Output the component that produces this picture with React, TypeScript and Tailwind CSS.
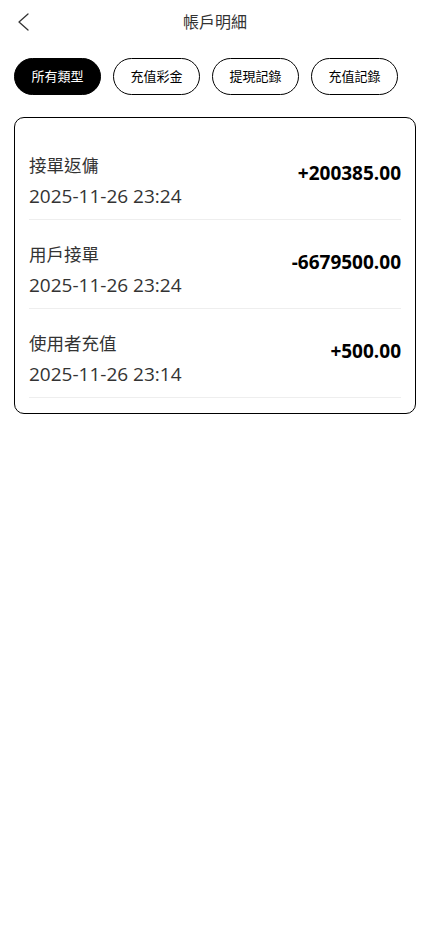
import React from "react";

const tabs = ["所有類型", "充值彩金", "提現記錄", "充值記錄"];
const rows = [
  { label: "接單返傭", date: "2025-11-26 23:24", amount: "+200385.00" },
  { label: "用戶接單", date: "2025-11-26 23:24", amount: "-6679500.00" },
  { label: "使用者充值", date: "2025-11-26 23:14", amount: "+500.00" },
];

export default function App() {
  return (
    <div
      className="w-[430px] min-h-[932px] bg-white"
      style={{ fontFamily: '"Open Sans", "Noto Sans CJK TC", sans-serif' }}
    >
      <div className="relative h-[44px] flex items-center justify-center">
        <svg
          className="absolute left-[14px] top-[10px]"
          width="20"
          height="24"
          viewBox="0 0 20 24"
          fill="none"
        >
          <path d="M14 4 L5 12 L14 20" stroke="#333" strokeWidth="1.3" strokeLinecap="round" strokeLinejoin="round" />
        </svg>
        <span className="text-[16px] text-[#333]">帳戶明細</span>
      </div>
      <div className="flex gap-[12px] px-[14px] mt-[14px]">
        {tabs.map((t, i) => (
          <div
            key={t}
            className={
              i === 0
                ? "w-[87px] h-[37px] rounded-full border border-black bg-black text-white text-[13px] flex items-center justify-center"
                : "w-[87px] h-[37px] rounded-full border border-black bg-white text-black text-[13px] flex items-center justify-center"
            }
          >
            {t}
          </div>
        ))}
      </div>
      <div className="mx-[14px] mt-[22px] border border-black rounded-[10px] px-[14px] pt-[13px] pb-[15px]">
        {rows.map((r) => (
          <div key={r.label} className="flex justify-between items-start h-[89px] border-b border-[#eeeeee] pt-[20px]">
            <div className="flex flex-col">
              <span className="text-[17.5px] leading-[28px] text-[#333]">{r.label}</span>
              <span className="text-[19px] leading-[28px] text-[#333] mt-[3px]">{r.date}</span>
            </div>
            <span className="text-[19px] leading-[24px] font-bold text-black mt-[10px]">{r.amount}</span>
          </div>
        ))}
      </div>
    </div>
  );
}
